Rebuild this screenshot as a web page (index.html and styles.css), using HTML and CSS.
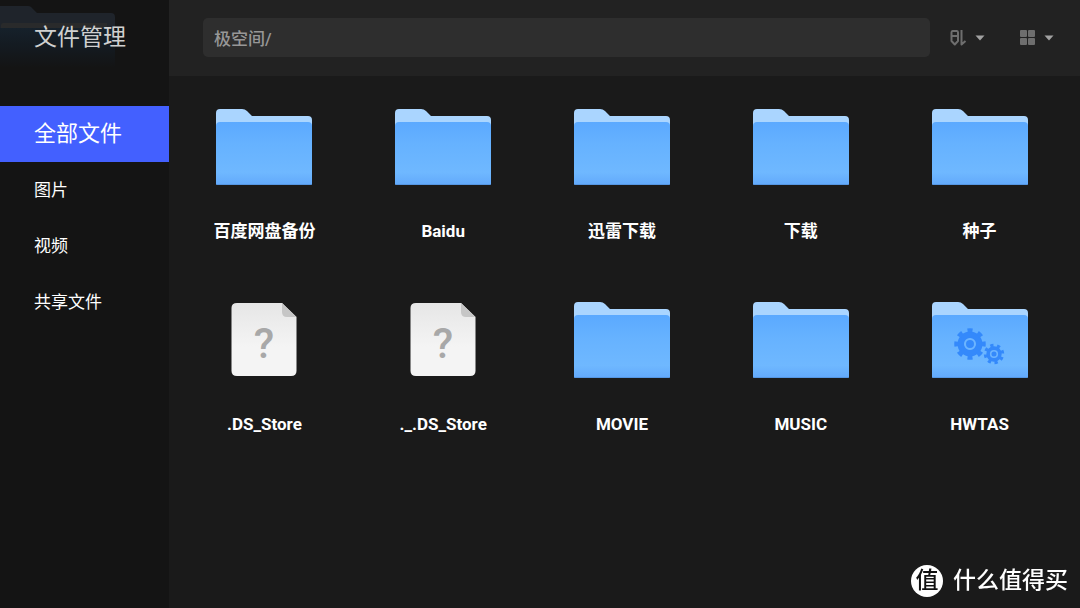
FILE: index.html
```html
<!DOCTYPE html>
<html lang="zh-CN">
<head>
<meta charset="utf-8">
<meta name="viewport" content="width=device-width, initial-scale=1">
<title>文件管理</title>
<link rel="stylesheet" href="styles.css">
</head>
<body>
<svg class="defs" aria-hidden="true">
  <defs>
    <linearGradient id="front" x1="0" y1="0" x2="0" y2="1">
      <stop offset="0" stop-color="#5ba9ff"/>
      <stop offset="0.35" stop-color="#66b2ff"/>
      <stop offset="0.8" stop-color="#6fb8ff"/>
      <stop offset="1" stop-color="#62a9fb"/>
    </linearGradient>
    <linearGradient id="paper" x1="0" y1="0" x2="0" y2="1">
      <stop offset="0" stop-color="#e6e6e6"/>
      <stop offset="0.6" stop-color="#f4f4f4"/>
      <stop offset="1" stop-color="#f4f4f4"/>
    </linearGradient>
    <linearGradient id="fade" x1="0" y1="0" x2="0" y2="1">
      <stop offset="0" stop-color="#16212b"/>
      <stop offset="0.4" stop-color="#141b22"/>
      <stop offset="1" stop-color="#141414"/>
    </linearGradient>
  </defs>
  <symbol id="folder" viewBox="0 0 96 78">
    <path fill="#aad5ff" d="M0 5Q0 1 4 1H26Q29 1 31 3L36 8H92Q96 8 96 12V30H0Z"/>
    <path fill="url(#front)" d="M0 18Q0 14 4 14H92Q96 14 96 18V76Q96 77 95 77H1Q0 77 0 76Z"/>
    <path fill="none" stroke="#5596e2" d="M1 76.500H95"/>
  </symbol>
  <symbol id="file" viewBox="0 0 66 78">
    <path fill="url(#paper)" d="M6 2H51L65.500 16V70Q65.500 75 60 75H6Q0.500 75 0.500 70V7Q0.500 2 6 2Z"/>
    <path fill="#c6c6c6" d="M51 2L65.500 16H56Q51 16 51 11Z"/>
  </symbol>
  <symbol id="gears" viewBox="0 0 96 78">
    <g fill="none" stroke="#3489fb">
      <circle cx="38" cy="43" r="9" stroke-width="7"/>
      <circle cx="38" cy="43" r="13.500" stroke-width="4.500" pathLength="16" stroke-dasharray="0.950 1.050" stroke-dashoffset="0.475"/>
      <circle cx="62" cy="53" r="5.500" stroke-width="4.400"/>
      <circle cx="62" cy="53" r="8.600" stroke-width="3.200" pathLength="16" stroke-dasharray="0.950 1.050" stroke-dashoffset="1.100"/>
    </g>
    <circle cx="38" cy="43" r="5" fill="#3489fb" stroke="#6cb4ff" stroke-width="2"/>
    <circle cx="62" cy="53" r="3.300" fill="#3489fb" stroke="#6cb4ff" stroke-width="1.600"/>
  </symbol>
</svg>

<div class="app">
  <aside class="sidebar">
    <svg class="backdrop" viewBox="0 0 120 76" aria-hidden="true">
      <path fill="#1f242b" d="M0 6H28Q30 6 31 7L37 13H111Q115 13 115 17V32H0Z"/>
      <path fill="url(#fade)" d="M0 28H115V68H0Z"/>
      <path fill="#292a2b" d="M1 25Q1 23 3 23H107V28H1Z"/>
    </svg>
    <h1 class="title">文件管理</h1>
    <nav class="nav">
      <a class="nav-item active" href="#all">全部文件</a>
      <a class="nav-item" href="#pictures">图片</a>
      <a class="nav-item" href="#videos">视频</a>
      <a class="nav-item" href="#shared">共享文件</a>
    </nav>
  </aside>

  <div class="content">
    <header class="toolbar">
      <input class="path" type="text" value="极空间/" aria-label="路径">
      <div class="tools">
        <button class="tool" type="button" aria-label="排序" aria-haspopup="true">
          <svg class="tool-icon" viewBox="0 0 18 18" aria-hidden="true">
            <path fill="none" stroke="#6e6e6e" stroke-width="2" stroke-linejoin="round" d="M3.500 2H8Q9 2 9 3.500V12L5.800 15.500L2.500 12V3.500Q2.500 2 3.500 2ZM2.500 7H9M12.500 1V15.500L16.500 12"/>
          </svg>
          <svg class="caret" viewBox="0 0 10 6" aria-hidden="true"><path fill="#a2a2a2" d="M0.500 0.500H9.500L5 5.500Z"/></svg>
        </button>
        <button class="tool" type="button" aria-label="视图" aria-haspopup="true">
          <svg class="tool-icon" viewBox="0 0 18 18" aria-hidden="true">
            <g fill="#6e6e6e"><rect x="2" y="1" width="7" height="7" rx="1"/><rect x="10" y="1" width="7" height="7" rx="1"/><rect x="2" y="9" width="7" height="7" rx="1"/><rect x="10" y="9" width="7" height="7" rx="1"/></g>
          </svg>
          <svg class="caret" viewBox="0 0 10 6" aria-hidden="true"><path fill="#a2a2a2" d="M0.500 0.500H9.500L5 5.500Z"/></svg>
        </button>
      </div>
    </header>

    <main class="grid">
      <a class="tile" href="#f1"><svg class="folder" aria-hidden="true"><use href="#folder"/></svg><span>百度网盘备份</span></a>
      <a class="tile" href="#f2"><svg class="folder" aria-hidden="true"><use href="#folder"/></svg><span>Baidu</span></a>
      <a class="tile" href="#f3"><svg class="folder" aria-hidden="true"><use href="#folder"/></svg><span>迅雷下载</span></a>
      <a class="tile" href="#f4"><svg class="folder" aria-hidden="true"><use href="#folder"/></svg><span>下载</span></a>
      <a class="tile" href="#f5"><svg class="folder" aria-hidden="true"><use href="#folder"/></svg><span>种子</span></a>
      <a class="tile" href="#f6"><svg class="file" viewBox="0 0 66 78" aria-hidden="true"><use href="#file"/><text class="question" x="33" y="57" text-anchor="middle">?</text></svg><span>.DS_Store</span></a>
      <a class="tile" href="#f7"><svg class="file" viewBox="0 0 66 78" aria-hidden="true"><use href="#file"/><text class="question" x="33" y="57" text-anchor="middle">?</text></svg><span>._.DS_Store</span></a>
      <a class="tile" href="#f8"><svg class="folder" aria-hidden="true"><use href="#folder"/></svg><span>MOVIE</span></a>
      <a class="tile" href="#f9"><svg class="folder" aria-hidden="true"><use href="#folder"/></svg><span>MUSIC</span></a>
      <a class="tile" href="#f10"><svg class="folder" aria-hidden="true"><use href="#folder"/><use href="#gears"/></svg><span>HWTAS</span></a>
    </main>
  </div>
</div>

<div class="watermark"><span class="seal">值</span><span>什么值得买</span></div>
</body>
</html>
```
FILE: styles.css
```css
* {
  box-sizing: border-box;
}

body {
  margin: 0;
  background: #1a1a1a;
  color: #fff;
  font-family: Roboto, "Noto Sans CJK SC", sans-serif;
}

a {
  color: inherit;
  text-decoration: none;
}

.defs {
  position: absolute;
  width: 0;
  height: 0;
}

.app {
  display: flex;
  min-height: 100vh;
}

.sidebar {
  position: relative;
  flex: 0 0 169px;
  background: #141414;
}

.backdrop {
  position: absolute;
  top: 0;
  left: 0;
  width: 120px;
  height: 76px;
}

.title {
  position: relative;
  margin: 0;
  padding: 22px 0 52px 34px;
  color: #d0d0d0;
  font-size: 23px;
  font-weight: 400;
  line-height: 32px;
}

.nav {
  display: flex;
  flex-direction: column;
}

.nav-item {
  padding-left: 34px;
  font-size: 17px;
  line-height: 56px;
}

.nav-item.active {
  background: #4360ff;
  font-size: 22px;
}

.content {
  flex: 1;
  min-width: 0;
}

.toolbar {
  display: flex;
  align-items: center;
  gap: 19px;
  padding: 18px 26px 19px 34px;
  background: #222;
}

.path {
  flex: 1;
  min-width: 0;
  height: 39px;
  padding: 0 11px;
  border: 0;
  border-radius: 5px;
  background: #2e2e2e;
  color: #979797;
  font: inherit;
  font-size: 17px;
  font-weight: 500;
}

.tools {
  display: flex;
  gap: 33px;
}

.tool {
  display: flex;
  align-items: center;
  gap: 8px;
  padding: 0;
  border: 0;
  background: none;
}

.tool-icon {
  width: 18px;
  height: 18px;
}

.caret {
  width: 10px;
  height: 6px;
}

.grid {
  display: grid;
  grid-template-columns: repeat(5, 1fr);
  row-gap: 55px;
  padding: 32px 11px 32px 6px;
}

.tile {
  display: flex;
  flex-direction: column;
  align-items: center;
  gap: 30px;
  font-size: 17px;
  font-weight: 700;
  line-height: 30px;
}

.folder {
  width: 96px;
  height: 78px;
}

.file {
  width: 66px;
  height: 78px;
}

.question {
  fill: #a8a8a8;
  font-family: Roboto, sans-serif;
  font-size: 42px;
  font-weight: 500;
}

.watermark {
  position: fixed;
  right: 12px;
  bottom: 11px;
  display: flex;
  align-items: center;
  gap: 10px;
  font-size: 23px;
  font-weight: 500;
  line-height: 32px;
}

.seal {
  width: 32px;
  height: 32px;
  border-radius: 50%;
  background: #fff;
  color: #111;
  font-size: 23px;
  text-align: center;
}
```
